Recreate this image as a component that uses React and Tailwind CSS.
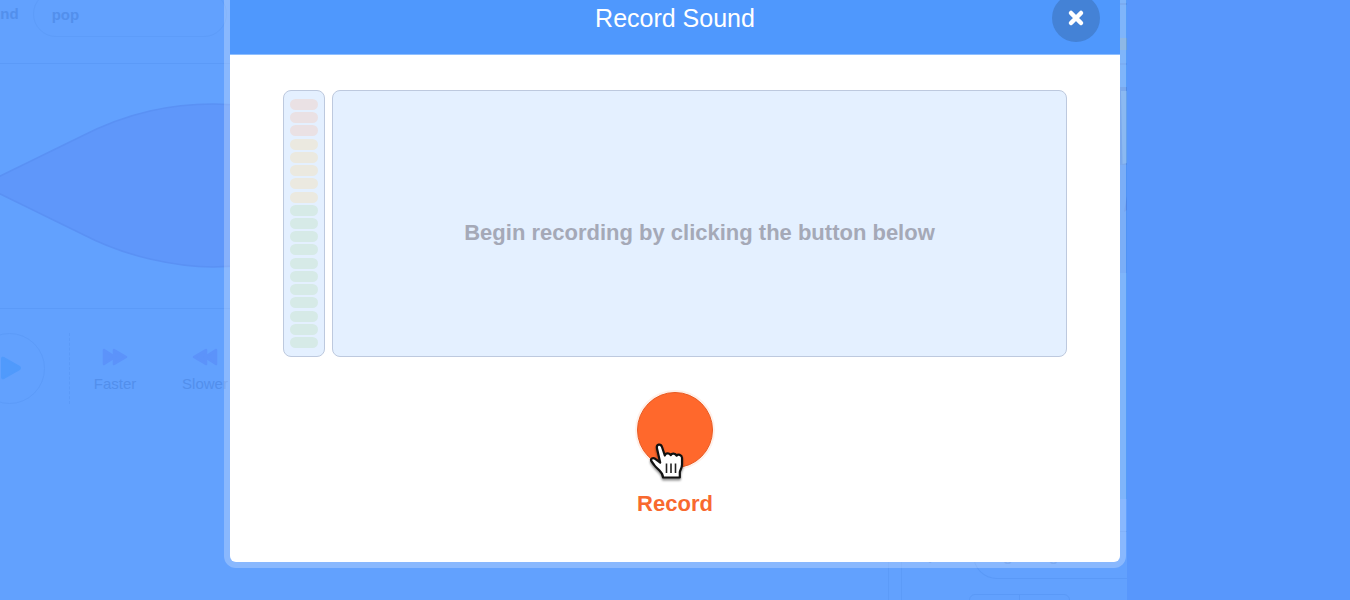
import React from "react";

const LEVELS = [
  "red", "red", "red",
  "yellow", "yellow", "yellow", "yellow", "yellow",
  "green", "green", "green", "green", "green", "green",
  "green", "green", "green", "green", "green",
];

const LEVEL_COLORS = {
  red: "bg-[#eae1e4]",
  yellow: "bg-[#ebe9e0]",
  green: "bg-[#d6eae7]",
};

function Waveform() {
  return (
    <svg width="440" height="244" viewBox="0 0 440 244" className="block" aria-hidden="true">
      <path
        d="M-4 114 L80 73 C105 60 128 52 150 47 C176 41 196 40 213 40 C280 40 360 60 440 112 V130 C360 180 280 203 213 203 C196 203 176 201 150 195 C128 190 105 182 80 169 L-4 128 Z"
        fill="#5f97fa"
        stroke="#5a91f4"
        strokeWidth="1.5"
      />
    </svg>
  );
}

function Effect({ label, flipped }) {
  return (
    <button type="button" className="flex w-[90px] flex-col items-center gap-2 text-[15px] leading-5 text-[#528fec]">
      <svg
        width="26"
        height="18"
        viewBox="0 0 26 18"
        aria-hidden="true"
        className={flipped ? "-scale-x-100" : ""}
      >
        <path
          d="M2 2 L13 9 L2 16 Z M12 2 L24 9 L12 16 Z"
          fill="#5c93fa"
          stroke="#5c93fa"
          strokeWidth="2.5"
          strokeLinejoin="round"
        />
      </svg>
      {label}
    </button>
  );
}

function SoundEditor() {
  return (
    <main className="w-[889px] shrink-0 overflow-hidden border-r border-[#5c9bf8]">
      <div className="-ml-7 flex h-16 items-start gap-[14px] border-b border-[#5b9af8] text-[15px] font-bold text-[#528fec]">
        <label htmlFor="sound-name" className="pt-1 leading-5">Sound</label>
        <input
          id="sound-name"
          defaultValue="pop"
          className="-mt-[9px] h-[46px] w-[194px] rounded-full border border-[#5d9cf9] bg-transparent px-[18px] outline-none"
        />
      </div>
      <Waveform />
      <div className="-ml-[26px] flex items-center border-t border-[#5b9af8] pt-6">
        <button
          type="button"
          aria-label="Play"
          className="flex size-[71px] items-center justify-center rounded-full border border-[#5c9bf9]"
        >
          <svg width="26" height="28" viewBox="0 0 26 28" aria-hidden="true">
            <path
              d="M5 4 Q5 2 7 3 L22 11.500 Q24 13 22 14.500 L7 23 Q5 24 5 22 Z"
              fill="#509afc"
              stroke="#509afc"
              strokeWidth="2"
              strokeLinejoin="round"
            />
          </svg>
        </button>
        <div className="ml-6 h-[71px] border-l border-dashed border-[#5b9af8]" />
        <div className="flex pt-[5px]">
          <Effect label="Faster" />
          <Effect label="Slower" flipped />
        </div>
      </div>
    </main>
  );
}

function Stage() {
  return (
    <svg width="100%" height="499" viewBox="0 0 225 499" preserveAspectRatio="none" className="block" aria-hidden="true">
      <rect width="225" height="499" fill="#559cf8" />
      <rect y="3" width="225" height="2" fill="#4f91ec" />
      <rect y="38" width="225" height="12" fill="#68a0dc" />
      <rect y="63" width="225" height="2" fill="#5093f1" />
      <rect y="87" width="225" height="78" fill="#4f8ce6" />
      <path d="M219 91 H225 V163 L220.500 164 Z" fill="#65a2ec" />
      <rect y="165" width="225" height="108" fill="#4f93f5" />
      <path d="M222 212 L225 196 V210 Z" fill="#4b87e8" />
    </svg>
  );
}

function SpritePanel() {
  return (
    <aside className="ml-3 flex-1 overflow-hidden border-l border-[#5c9bf8]">
      <Stage />
      <div className="flex items-center gap-3 pt-8 text-[15px] font-bold text-[#528fec]">
        <label htmlFor="sprite-name" className="pl-4">Sprite</label>
        <input
          id="sprite-name"
          defaultValue="Ogre dog"
          className="h-12 min-w-0 flex-1 rounded-l-full border border-r-0 border-[#5a99f7] bg-transparent px-[18px] outline-none"
        />
      </div>
      <div className="mt-[15px] ml-[67px] flex h-9 w-[101px] rounded-md border border-[#5a99f7]">
        <button type="button" aria-label="Show" className="flex-1 border-r border-[#5a99f7]" />
        <button type="button" aria-label="Hide" className="flex-1" />
      </div>
    </aside>
  );
}

function HandCursor() {
  return (
    <svg
      width="40"
      height="44"
      viewBox="0 0 40 44"
      aria-hidden="true"
      className="pointer-events-none absolute top-12 left-[10px] drop-shadow-[0_2px_1px_rgba(0,0,0,0.45)]"
    >
      <path
        d="M10 8.500 C9 4 13.800 3.300 15 7 L17.800 15.500 C18.500 12.600 22.800 12.600 23.700 15.200 C24.700 12.900 28.500 13 29.500 15.700 C31 13.800 34.800 14.600 35 17.800 V24.500 C35 27.500 33.500 29.500 32.800 32 V37.500 H16 C16 34.500 14.500 32.500 12.500 30.500 C10.500 28.500 8.500 27 7.200 25 L4.300 21 C3.200 18.700 5.800 17.300 8.200 18.800 L13.200 22.500 Z"
        fill="#fff"
        stroke="#111"
        strokeWidth="2.2"
        strokeLinejoin="round"
      />
      <path d="M19.500 23.500 V33 M24 23.500 V33 M28.500 23.500 V33" stroke="#222" strokeWidth="1.6" />
    </svg>
  );
}

function RecordModal() {
  return (
    <div className="absolute inset-0 flex items-start justify-center overflow-hidden">
      <section
        role="dialog"
        aria-labelledby="record-title"
        className="-mt-6 w-full max-w-[902px] rounded-xl bg-white/25 p-1.5"
      >
        <div className="overflow-hidden rounded-md bg-white">
          <header className="grid h-[73px] grid-cols-[1fr_auto_1fr] items-center border-b border-[#8fbffe] bg-[#4f98fd] px-5">
            <h1 id="record-title" className="col-start-2 text-[25px] leading-8 text-white">Record Sound</h1>
            <button
              type="button"
              aria-label="Close"
              className="flex size-12 items-center justify-center justify-self-end rounded-full bg-[#4482d6]"
            >
              <svg width="18" height="18" viewBox="0 0 18 18" aria-hidden="true">
                <path d="M4 4 L14 14 M14 4 L4 14" stroke="#fff" strokeWidth="4.5" strokeLinecap="round" />
              </svg>
            </button>
          </header>
          <div className="flex flex-col items-center px-[53px] pt-[35px] pb-[46px]">
            <div className="flex h-[267px] w-full gap-[7px]">
              <div className="flex w-[42px] flex-col justify-between rounded-lg border border-[#bdc9de] bg-[#e4f0ff] px-1.5 py-2">
                {LEVELS.map((level, i) => (
                  <div key={i} className={`h-[11px] rounded-full ${LEVEL_COLORS[level]}`} />
                ))}
              </div>
              <div className="flex flex-1 items-center justify-center rounded-lg border border-[#bdc9de] bg-[#e4f0ff] pt-[18px]">
                <p className="text-[22px] leading-7 font-bold text-[#a5a9b7]">
                  Begin recording by clicking the button below
                </p>
              </div>
            </div>
            <button
              type="button"
              className="relative mt-[35px] flex flex-col items-center gap-6 text-[22px] leading-6 font-bold text-[#f8692f]"
            >
              <span className="size-[76px] rounded-full border border-[#e85a22] bg-[#ff682c] ring-2 ring-[#fff0e9]" />
              Record
              <HandCursor />
            </button>
          </div>
        </div>
      </section>
    </div>
  );
}

export default function App() {
  return (
    <div className="relative h-screen overflow-hidden bg-[#5897fc] font-['Liberation_Sans',Arial,sans-serif]">
      <div className="flex h-full w-full max-w-[1127px] bg-[#62a1fe]">
        <SoundEditor />
        <SpritePanel />
      </div>
      <RecordModal />
    </div>
  );
}
